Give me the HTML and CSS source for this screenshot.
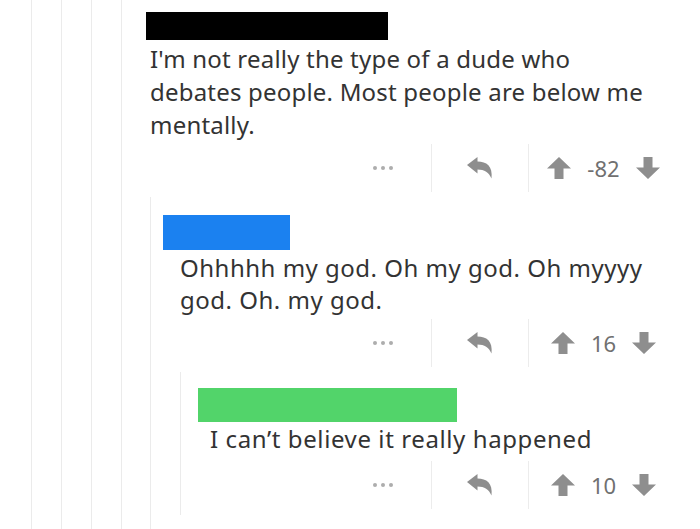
FILE: index.html
```html
<!DOCTYPE html>
<html>
<head>
<meta charset="utf-8">
<link rel="stylesheet" href="styles.css">
</head>
<body>
<div class="page">
  <div class="rail rail-first">
    <div class="rail">
      <div class="rail">
        <div class="rail">
          <article class="comment c1">
            <div class="name name-black"></div>
            <p class="body">I'm not really the type of a dude who debates people. Most people are below me mentally.</p>
            <div class="actions">
              <div class="cell dots"><span></span><span></span><span></span></div>
              <div class="cell reply">
                <svg width="26" height="22" viewBox="0 0 26 22"><path d="M0 8 L10.5 0 V4.5 C19.5 4.5 26 9 24.5 21.5 C22 15.5 17.5 12.5 10.5 12.5 V16.5 Z" fill="#8e8e8e"/></svg>
              </div>
              <div class="cell votes">
                <svg width="24" height="22" viewBox="0 0 24 22"><path d="M12 0 L24 11.5 H16.5 V22 H7.5 V11.5 H0 Z" fill="#8e8e8e"/></svg>
                <span class="score">-82</span>
                <svg width="24" height="22" viewBox="0 0 24 22"><path d="M12 22 L24 10.5 H16.5 V0 H7.5 V10.5 H0 Z" fill="#8e8e8e"/></svg>
              </div>
            </div>
            <div class="children">
              <article class="comment c2">
                <div class="name name-blue"></div>
                <p class="body">Ohhhhh my god. Oh my god. Oh myyyy god. Oh. my god.</p>
                <div class="actions">
                  <div class="cell dots"><span></span><span></span><span></span></div>
                  <div class="cell reply">
                    <svg width="26" height="22" viewBox="0 0 26 22"><path d="M0 8 L10.5 0 V4.5 C19.5 4.5 26 9 24.5 21.5 C22 15.5 17.5 12.5 10.5 12.5 V16.5 Z" fill="#8e8e8e"/></svg>
                  </div>
                  <div class="cell votes">
                    <svg width="24" height="22" viewBox="0 0 24 22"><path d="M12 0 L24 11.5 H16.5 V22 H7.5 V11.5 H0 Z" fill="#8e8e8e"/></svg>
                    <span class="score">16</span>
                    <svg width="24" height="22" viewBox="0 0 24 22"><path d="M12 22 L24 10.5 H16.5 V0 H7.5 V10.5 H0 Z" fill="#8e8e8e"/></svg>
                  </div>
                </div>
                <div class="children">
                  <article class="comment c3">
                    <div class="name name-green"></div>
                    <p class="body">I can’t believe it really happened</p>
                    <div class="actions">
                      <div class="cell dots"><span></span><span></span><span></span></div>
                      <div class="cell reply">
                        <svg width="26" height="22" viewBox="0 0 26 22"><path d="M0 8 L10.5 0 V4.5 C19.5 4.5 26 9 24.5 21.5 C22 15.5 17.5 12.5 10.5 12.5 V16.5 Z" fill="#8e8e8e"/></svg>
                      </div>
                      <div class="cell votes">
                        <svg width="24" height="22" viewBox="0 0 24 22"><path d="M12 0 L24 11.5 H16.5 V22 H7.5 V11.5 H0 Z" fill="#8e8e8e"/></svg>
                        <span class="score">10</span>
                        <svg width="24" height="22" viewBox="0 0 24 22"><path d="M12 22 L24 10.5 H16.5 V0 H7.5 V10.5 H0 Z" fill="#8e8e8e"/></svg>
                      </div>
                    </div>
                  </article>
                </div>
              </article>
            </div>
          </article>
        </div>
      </div>
    </div>
  </div>
</div>
</body>
</html>
```

FILE: styles.css
```css
html, body {
  margin: 0;
  padding: 0;
  background: #ffffff;
}
body {
  font-family: "Noto Sans", "Open Sans", sans-serif;
  color: #333333;
  overflow: hidden;
}
.page {
  height: 529px;
  padding-right: 22px;
  box-sizing: border-box;
  display: flex;
  flex-direction: column;
}
.rail {
  margin-left: 29px;
  border-left: 1px solid #ebebeb;
  flex: 1;
  display: flex;
  flex-direction: column;
}
.rail-first {
  margin-left: 31px;
}
.comment {
  display: flex;
  flex-direction: column;
}
.c1 {
  padding-left: 28px;
  padding-top: 12px;
  flex: 1;
}
.c1 > .children {
  flex: 1;
}
.name {
  height: 28px;
}
.name-black {
  background: #000000;
  width: 242px;
  margin-left: -4px;
}
.body {
  margin: 0;
  font-size: 24px;
  line-height: 33px;
}
.c1 .body {
  margin-top: 2px;
  margin-right: 28px;
  letter-spacing: 0.2px;
}
.actions {
  display: flex;
  justify-content: flex-end;
  height: 48px;
  margin-top: 3px;
}
.cell {
  display: flex;
  align-items: center;
  justify-content: center;
}
.dots {
  width: 97px;
  gap: 4px;
}
.dots span {
  width: 4px;
  height: 4px;
  border-radius: 50%;
  background: #adadad;
}
.reply {
  width: 96px;
  border-left: 1px solid #ececec;
}
.votes {
  width: 149px;
  border-left: 1px solid #ececec;
  gap: 16px;
}
.score {
  font-size: 22px;
  color: #707070;
}
.children {
  border-left: 1px solid #ebebeb;
  margin-top: 5px;
}
.c2 {
  padding-left: 29px;
  padding-top: 18px;
}
.name-blue {
  background: #1b81f0;
  width: 127px;
  height: 35px;
  margin-left: -17px;
}
.c2 .body {
  line-height: 32px;
  letter-spacing: 0.5px;
}
.c2 > .actions {
  margin-top: 3px;
}
.c3 {
  padding-left: 29px;
  padding-top: 16px;
  padding-bottom: 6px;
}
.name-green {
  background: #52d46a;
  width: 259px;
  height: 34px;
  margin-left: -12px;
}
.c3 .body {
  line-height: 32px;
  margin-top: 1px;
  letter-spacing: 0.6px;
}
.c3 > .actions {
  margin-top: 6px;
}
```
